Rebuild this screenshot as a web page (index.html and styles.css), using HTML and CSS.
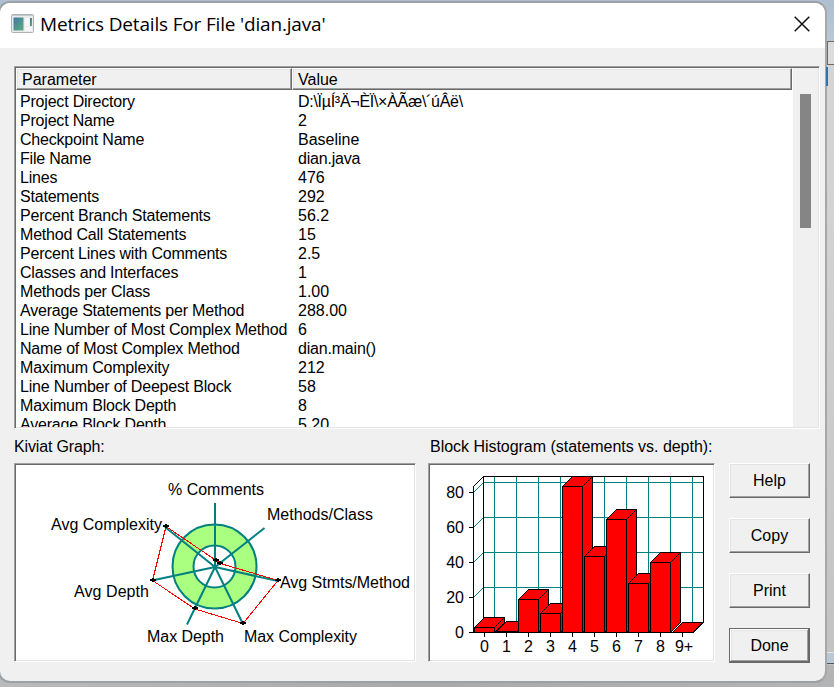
FILE: index.html
```html
<!DOCTYPE html>
<html lang="en">
<head>
    <meta charset="utf-8">
    <title>Metrics Details For File 'dian.java'</title>
    <link rel="stylesheet" href="styles.css">
</head>
<body>
    <div class="behind">
        <div class="behind-head"></div>
        <div class="behind-select"></div>
        <div class="behind-status"></div>
    </div>
    <div class="window">
        <div class="titlebar">
            <svg class="app-icon" width="24" height="20" viewBox="0 0 24 20">
                <defs>
                    <linearGradient id="ico" x1="0" y1="0" x2="1" y2="1">
                        <stop offset="0" stop-color="#3f76a5"/>
                        <stop offset="1" stop-color="#5cb07c"/>
                    </linearGradient>
                </defs>
                <rect x="0.5" y="0.5" width="22" height="18" rx="1" fill="#e9ebec" stroke="#aeb2b5"/>
                <path d="M1 1.5H22" stroke="#c3c8cb"/>
                <rect x="2.5" y="3.5" width="10" height="13" fill="url(#ico)"/>
                <rect x="14" y="4" width="4" height="8" fill="#f7f7f7"/>
                <rect x="19" y="4" width="2" height="8" fill="url(#ico)"/>
                <rect x="14" y="13" width="7" height="4" fill="#f7f7f7"/>
            </svg>
            <div class="title">Metrics Details For File 'dian.java'</div>
            <svg class="close" width="16" height="16" viewBox="0 0 16 16">
                <path d="M0.7 0.7L15.3 15.3M15.3 0.7L0.7 15.3" stroke="#111" stroke-width="1.5"/>
            </svg>
        </div>
        <div class="list">
            <div class="list-main">
                <div class="list-head">
                    <div class="col-name">Parameter</div>
                    <div class="col-value">Value</div>
                </div>
                <div class="rows">
                    <div>Project Directory</div><div>D:\ÏµÍ³Ä¬ÈÏ\×ÀÃæ\´úÂë\</div>
                    <div>Project Name</div><div>2</div>
                    <div>Checkpoint Name</div><div>Baseline</div>
                    <div>File Name</div><div>dian.java</div>
                    <div>Lines</div><div>476</div>
                    <div>Statements</div><div>292</div>
                    <div>Percent Branch Statements</div><div>56.2</div>
                    <div>Method Call Statements</div><div>15</div>
                    <div>Percent Lines with Comments</div><div>2.5</div>
                    <div>Classes and Interfaces</div><div>1</div>
                    <div>Methods per Class</div><div>1.00</div>
                    <div>Average Statements per Method</div><div>288.00</div>
                    <div>Line Number of Most Complex Method</div><div>6</div>
                    <div>Name of Most Complex Method</div><div>dian.main()</div>
                    <div>Maximum Complexity</div><div>212</div>
                    <div>Line Number of Deepest Block</div><div>58</div>
                    <div>Maximum Block Depth</div><div>8</div>
                    <div>Average Block Depth</div><div>5.20</div>
                </div>
            </div>
            <div class="scrollbar"><div class="thumb"></div></div>
        </div>
        <div class="bottom">
            <div class="kiviat">
                <div class="label">Kiviat Graph:</div>
                <div class="panel">
                    <svg width="398" height="195" viewBox="16 465 398 195">
                        <circle cx="214.5" cy="566.5" r="31.5" fill="none" stroke="#aaff80" stroke-width="21"/>
                        <g fill="none" stroke="#008080" stroke-width="2">
                            <circle cx="214.5" cy="566.5" r="42"/>
                            <circle cx="214.5" cy="566.5" r="21"/>
                            <path d="M215 567V503M215 567L264.500 528M215 567L278 581M215 567L243 624M215 567L187 624.500M215 567L152 580.500M215 567L165 527"/>
                        </g>
                        <path class="crisp" d="M215.500 560L220.500 563.500L278 580.500L243 623.500L195 609L152.500 580.500L166 526.500Z" fill="none" stroke="#f00"/>
                        <g fill="#000">
                            <path id="dot" d="M213 559h2v-1h2v1h2v2h-2v1h-2v-1h-2z"/>
                            <use href="#dot" x="4" y="3"/>
                            <use href="#dot" x="62" y="20"/>
                            <use href="#dot" x="27" y="63"/>
                            <use href="#dot" x="-21" y="48"/>
                            <use href="#dot" x="-63" y="20"/>
                            <use href="#dot" x="-50" y="-34"/>
                        </g>
                        <g class="chart-text">
                            <text x="168" y="495" textLength="96">% Comments</text>
                            <text x="267" y="520" textLength="106">Methods/Class</text>
                            <text x="51" y="530" textLength="111">Avg Complexity</text>
                            <text x="280" y="588" textLength="130">Avg Stmts/Method</text>
                            <text x="74" y="597" textLength="75">Avg Depth</text>
                            <text x="147" y="642" textLength="77">Max Depth</text>
                            <text x="244" y="642" textLength="113">Max Complexity</text>
                        </g>
                    </svg>
                </div>
            </div>
            <div class="histogram">
                <div class="label">Block Histogram (statements vs. depth):</div>
                <div class="panel">
                    <svg width="283" height="195" viewBox="430 465 283 195">
                        <!-- back wall grid -->
                        <path class="crisp" fill="none" stroke="#008080" d="M494.500 476V622M516.500 476V622M538.500 476V622M560.500 476V622M582.500 476V622M604.500 476V622M626.500 476V622M648.500 476V622M670.500 476V622M692.500 476V622M473.500 492.500L483.500 482.500H703M473.500 527.500L483.500 517.500H703M473.500 562.500L483.500 552.500H703M473.500 597.500L483.500 587.500H703"/>
                        <path class="crisp" fill="none" stroke="#000" d="M469 632.500H693.500L703.500 622.500V476.500H483.500L473.500 486.500V632.500M483.500 476.500V622.500L473.500 632.500M469 492.500H473M469 527.500H473M469 562.500H473M469 597.500H473"/>
                        <path class="crisp" fill="none" stroke="#000" d="M484.500 632V637M506.500 632V637M528.500 632V637M550.500 632V637M572.500 632V637M594.500 632V637M616.500 632V637M638.500 632V637M660.500 632V637M682.500 632V637"/>
                        <!-- bars: outline, then front edges -->
                        <g id="bars" class="crisp" fill="#f00" stroke="#000"></g>
                        <g class="chart-text" text-anchor="end">
                            <text x="464" y="498">80</text>
                            <text x="464" y="533">60</text>
                            <text x="464" y="568">40</text>
                            <text x="464" y="603">20</text>
                            <text x="464" y="638">0</text>
                        </g>
                        <g class="chart-text" text-anchor="middle">
                            <text x="484.500" y="652">0</text>
                            <text x="506.500" y="652">1</text>
                            <text x="528.500" y="652">2</text>
                            <text x="550.500" y="652">3</text>
                            <text x="572.500" y="652">4</text>
                            <text x="594.500" y="652">5</text>
                            <text x="616.500" y="652">6</text>
                            <text x="638.500" y="652">7</text>
                            <text x="660.500" y="652">8</text>
                            <text x="684" y="652">9+</text>
                        </g>
                    </svg>
                </div>
            </div>
            <div class="buttons">
                <button class="btn">Help</button>
                <button class="btn">Copy</button>
                <button class="btn">Print</button>
                <button class="btn btn-default">Done</button>
            </div>
        </div>
    </div>
    <script src="script.js"></script>
</body>
</html>
```
FILE: styles.css
```css
* {
    box-sizing: border-box;
}
body {
    margin: 0;
    width: 834px;
    height: 687px;
    overflow: hidden;
    position: relative;
    font-family: "Liberation Sans", Arial, sans-serif;
    font-size: 16px;
    color: #000;
    background: linear-gradient(90deg, #bababa, #a9a9a9 50%, #b4b4b4);
}
/* strip of the parent window */
.behind {
    position: absolute;
    top: 0;
    left: 0;
    width: 834px;
    height: 665px;
    background: linear-gradient(#adbfd0, #b9c8d6 41px, #d4d4d4 42px, #d3d3d3 200px, #c2c2c2);
    display: flow-root;
}
.behind-head {
    margin: 41px 0 0 826px;
    height: 24px;
    border: 1px solid #696969;
    border-right: none;
    border-left-width: 2px;
    background: #dcdcdc;
}
.behind-select {
    position: absolute;
    top: 67px;
    left: 826px;
    z-index: 1;
    width: 2px;
    height: 19px;
    background: #2f73ad;
}
.behind-status {
    position: absolute;
    right: 0;
    bottom: 1px;
    width: 10px;
    height: 12px;
    background: #b9c8d6;
    border-top: 1px solid #e5e5e5;
    border-bottom: 1px solid #555;
}
.window {
    position: absolute;
    top: 1px;
    left: -2px;
    width: 829px;
    height: 682px;
    border: 2px solid #9ba1a5;
    border-right-color: #a8a8a8;
    border-radius: 12px;
    background: #f0f0f0;
    overflow: hidden;
}
.titlebar {
    display: flex;
    align-items: center;
    height: 45px;
    padding: 0 15px 4px 11px;
    background: #fff;
}
.app-icon {
    margin-top: 1px;
}
.title {
    flex: 1;
    margin-left: 5px;
    font-family: "Open Sans", "Noto Sans", sans-serif;
    font-size: 19px;
    letter-spacing: -0.18px;
    line-height: 40px;
    white-space: nowrap;
}
.list {
    display: flex;
    width: 806px;
    height: 363px;
    margin: 18px 0 0 14px;
}
.list, .panel {
    border: 1px solid;
    border-color: #a0a0a0 #fff #fff #a0a0a0;
    box-shadow: inset 1px 1px #696969, inset -1px -1px #e3e3e3;
    background: #fff;
}
.list {
    padding: 1px;
}
.list-main {
    flex: 1;
    overflow: hidden;
}
.list-head {
    display: flex;
    width: 776px;
    height: 22px;
    line-height: 21px;
}
.col-name, .col-value {
    padding-left: 5px;
    background: #f0f0f0;
    border: 1px solid;
    border-color: #fff #696969 #696969 #fff;
    box-shadow: inset -1px -1px #a0a0a0, inset 1px 1px #e3e3e3;
}
.col-name {
    width: 276px;
}
.col-value {
    flex: 1;
}
.rows {
    display: grid;
    grid-template-columns: 278px 1fr;
    grid-auto-rows: 19px;
    padding: 2px 0 0 4px;
    line-height: 19px;
    white-space: nowrap;
}
.rows div:nth-child(odd) {
    letter-spacing: -0.2px;
}
.rows div:nth-child(2) {
    letter-spacing: -0.28px;
}
.rows div:nth-child(8), .rows div:nth-child(28) {
    letter-spacing: -0.2px;
}
.scrollbar {
    width: 25px;
    background: #f0f0f0;
}
.thumb {
    width: 11px;
    height: 134px;
    margin: 26px 0 0 7px;
    background: #858585;
}
.bottom {
    display: flex;
    padding: 7px 0 0 14px;
}
.label {
    height: 27px;
    line-height: 22px;
    letter-spacing: -0.15px;
    white-space: nowrap;
}
.histogram .label {
    padding-left: 2px;
    letter-spacing: -0.03px;
}
.panel {
    height: 199px;
    padding: 1px;
}
.panel svg {
    display: block;
}
.kiviat {
    width: 402px;
    margin-right: 12px;
}
.histogram {
    width: 287px;
}
.chart-text {
    font-family: "Liberation Sans", Arial, sans-serif;
    font-size: 16px;
    fill: #000;
}
.crisp {
    shape-rendering: crispEdges;
}
.buttons {
    display: flex;
    flex-direction: column;
    gap: 20px;
    margin-left: 14px;
    padding-top: 27px;
}
.btn {
    width: 81px;
    height: 35px;
    padding: 0;
    font: inherit;
    color: #000;
    background: #f0f0f0;
    border: 1px solid;
    border-color: #fff #696969 #696969 #fff;
    box-shadow: inset -1px -1px #a0a0a0, inset 1px 1px #e3e3e3;
}
.btn-default {
    border-color: #696969;
    box-shadow: inset -1px -1px #696969, inset 1px 1px #fff, inset -2px -2px #a0a0a0, inset 2px 2px #e3e3e3;
}
```
FILE: script.js
```js
// top edge of the front face for each depth, the floor is at 632
var tops = [627, 631, 599, 613, 486, 556, 519, 583, 562, 632];
var html = "";
tops.forEach(function (top, i) {
    var x = 474.5 + i * 22;
    var y = top + 0.5;
    var r = x + 20;
    html += '<path d="M' + x + ' 632.5V' + y + 'l10 -10h20V622.5L' + r + ' 632.5Z"/>';
    html += '<path fill="none" d="M' + x + ' ' + y + 'H' + r + 'V632.5M' + r + ' ' + y + 'l10 -10"/>';
});
document.getElementById("bars").innerHTML = html;
```
